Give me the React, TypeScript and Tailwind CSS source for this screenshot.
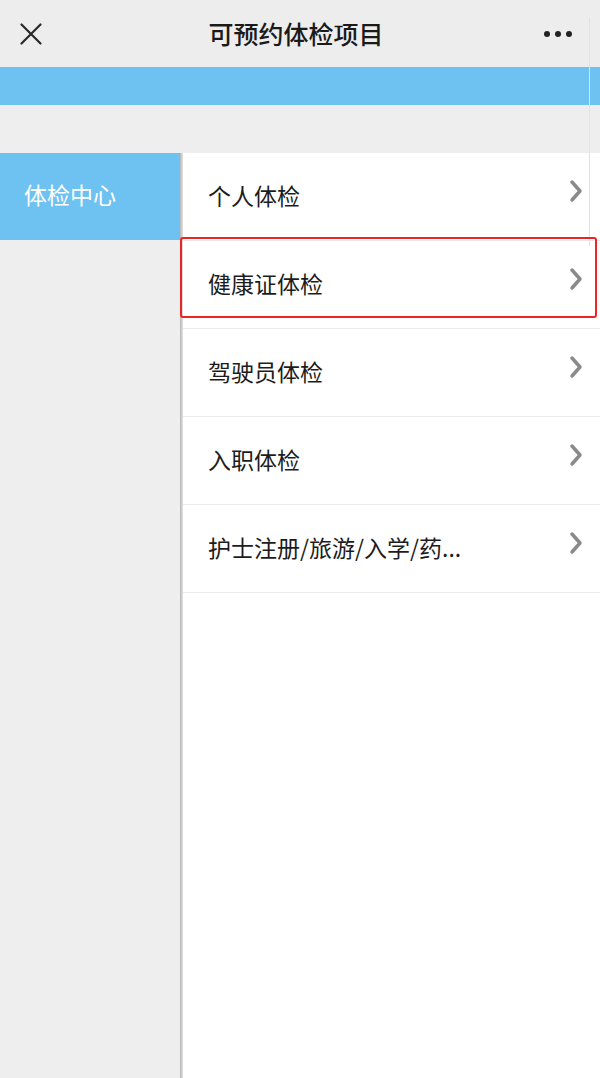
import React from "react"

const items = ["个人体检", "健康证体检", "驾驶员体检", "入职体检", "护士注册/旅游/入学/药..."]

const font = { fontFamily: '"Noto Sans CJK SC", "Noto Sans", sans-serif' }

function Chevron() {
  return (
    <svg width="16" height="24" viewBox="0 0 16 24" className="mb-[10px] shrink-0">
      <path d="M4 3 L12 12 L4 21" fill="none" stroke="#8a8a8a" strokeWidth="3.5" strokeLinecap="round" strokeLinejoin="round" />
    </svg>
  )
}

export default function App() {
  return (
    <div className="relative h-[1078px] w-[600px] overflow-hidden bg-[#efeeef]" style={font}>
      {/* top nav */}
      <header className="flex h-[67px] items-center justify-between bg-[#ededed] pl-[20px] pr-[18px]">
        <svg width="22" height="22" viewBox="0 0 22 22">
          <path d="M1.5 1.5 L20.5 20.5 M20.5 1.5 L1.5 20.5" stroke="#2a2a2a" strokeWidth="2.2" strokeLinecap="round" />
        </svg>
        <h1 className="pl-[6px] text-[25px] font-medium text-[#1a1a1a]">可预约体检项目</h1>
        <div className="flex gap-[5px] pr-[10px]">
          <span className="h-[6px] w-[6px] rounded-full bg-[#222]" />
          <span className="h-[6px] w-[6px] rounded-full bg-[#222]" />
          <span className="h-[6px] w-[6px] rounded-full bg-[#222]" />
        </div>
      </header>

      <div className="h-[38px] bg-[#6ec2f1] shadow-[0_1px_2px_rgba(0,0,0,0.08)]" />
      <div className="h-[48px] bg-[#eeeeee]" />

      <div className="flex">
        <aside className="w-[180px] shrink-0">
          <div className="flex h-[87px] items-center bg-[#6ec2f1] pb-[4px] pl-[24px] text-[23px] text-white">
            体检中心
          </div>
        </aside>
        <div className="h-[930px] w-[3px] shrink-0 bg-gradient-to-r from-[#b5b5b5] to-[#e4e4e4]" />
        <main className="flex-1 bg-white">
          {items.map((label) => (
            <div
              key={label}
              className="flex h-[88px] items-center justify-between border-b border-[#ececec] pb-[2px] pl-[25px] pr-[16px]"
            >
              <span className="text-[23px] text-[#1c1c1c]">{label}</span>
              <Chevron />
            </div>
          ))}
          <div className="h-[500px]" />
        </main>
      </div>

      {/* faint overlay edge on the right */}
      <div className="pointer-events-none absolute right-[10px] top-[18px] h-[228px] w-[1px] bg-[#e2e2e2]" />

      {/* red highlight box */}
      <div className="pointer-events-none absolute left-[180px] top-[237px] h-[81px] w-[417px] rounded-[3px] border-2 border-[#ee2424]" />
    </div>
  )
}
